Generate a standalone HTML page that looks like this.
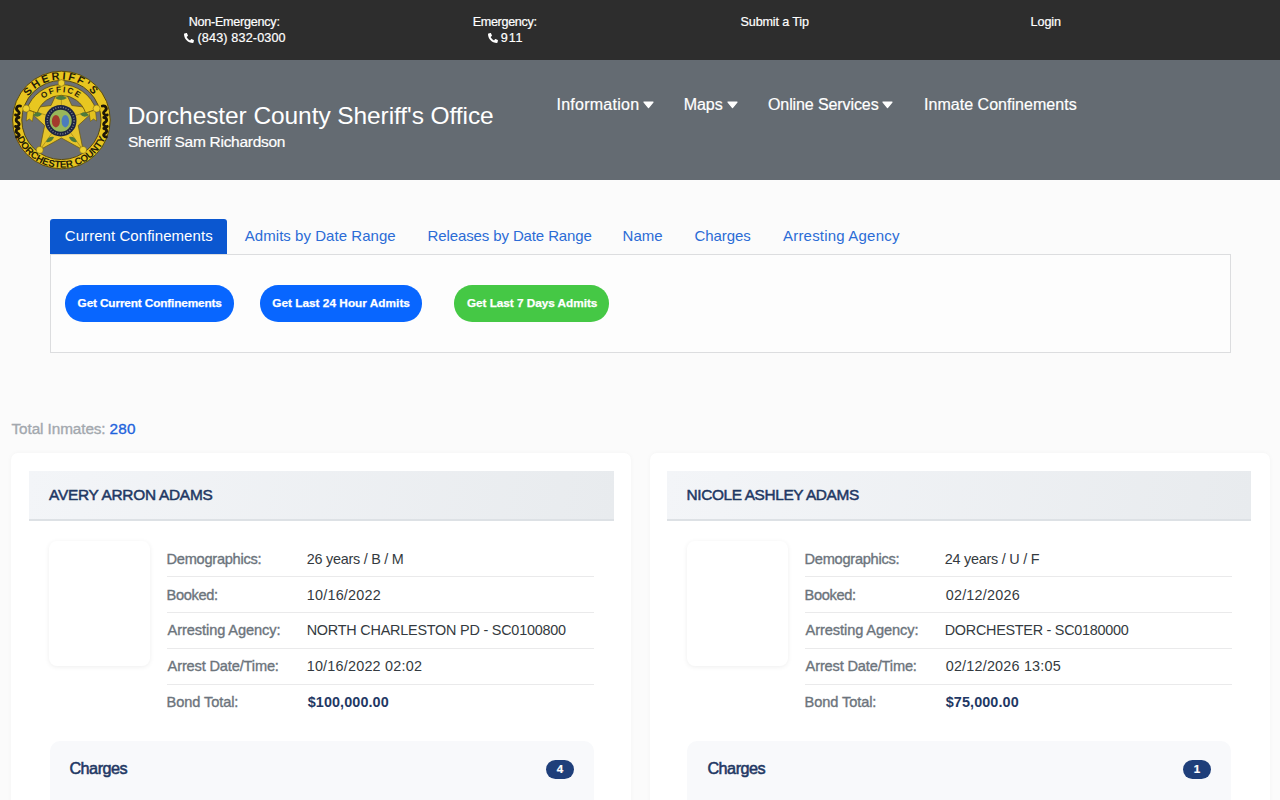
<!DOCTYPE html>
<html>
<head>
<meta charset="utf-8">
<style>
*{box-sizing:border-box;margin:0;padding:0}
html,body{width:1280px;height:800px;overflow:hidden}
body{position:relative;background:#fbfbfb;font-family:"Liberation Sans",sans-serif}
.a{position:absolute;white-space:nowrap;line-height:1}
.box{position:absolute}
.ph{position:absolute;width:10px;height:10px}
.caret{position:absolute;width:11px;height:8px}
.btn{position:absolute;height:36.4px;border-radius:18.2px;background:#0866ff}
.card{position:absolute;top:453px;width:620px;height:400px;background:#ffffff;border-radius:7px;box-shadow:0 0 5px rgba(0,0,0,0.035)}
.chdr{position:absolute;top:471px;width:584.5px;height:50px;background:linear-gradient(100deg,#f3f5f8,#e8ebee);border-bottom:2px solid #dde1e5}
.photo{position:absolute;top:541px;width:101px;height:124.8px;background:#fff;border-radius:8px;box-shadow:0 1px 5px rgba(0,0,0,0.07)}
.sep{position:absolute;height:1px;width:427px;background:#eaeaeb}
.chg{position:absolute;top:740.6px;width:544px;height:80px;background:#f8f9fb;border-radius:10px}
.badge{position:absolute;top:760px;width:28px;height:18.8px;border-radius:9.4px;background:#1f3f7a;color:#fff;font-size:11.5px;font-weight:bold;-webkit-text-stroke:0.2px #fff;text-align:center;line-height:19.5px}
</style>
</head>
<body>
<div class="box" style="left:0;top:0;width:1280px;height:60px;background:#2d2d2d"></div>
<div class="box" style="left:0;top:60px;width:1280px;height:120px;background:#646b72"></div>
<svg class="ph" style="left:184px;top:32.5px" viewBox="0 0 512 512"><path fill="#fff" d="M497 361l-111-48c-10-4-21-1-28 7l-49 60C232 344 170 282 134 205l60-49c8-7 11-18 7-28L153 17C148 6 136 0 124 3L21 27C9 29 0 40 0 52c0 253 205 460 460 460 12 0 23-9 25-21l24-103c3-12-3-24-12-27z"/></svg>
<svg class="ph" style="left:487.5px;top:32.5px" viewBox="0 0 512 512"><path fill="#fff" d="M497 361l-111-48c-10-4-21-1-28 7l-49 60C232 344 170 282 134 205l60-49c8-7 11-18 7-28L153 17C148 6 136 0 124 3L21 27C9 29 0 40 0 52c0 253 205 460 460 460 12 0 23-9 25-21l24-103c3-12-3-24-12-27z"/></svg>
<div class="a" style="left:188.7px;top:16px;font-size:12.6px;color:#fff;letter-spacing:-0.254px;-webkit-text-stroke:0.2px #fff">Non-Emergency:</div>
<div class="a" style="left:197.5px;top:32px;font-size:12.6px;color:#fff;letter-spacing:0.154px;-webkit-text-stroke:0.2px #fff">(843) 832-0300</div>
<div class="a" style="left:472.7px;top:16px;font-size:12.6px;color:#fff;letter-spacing:-0.322px;-webkit-text-stroke:0.2px #fff">Emergency:</div>
<div class="a" style="left:500.8px;top:32px;font-size:12.6px;color:#fff;letter-spacing:0.85px;-webkit-text-stroke:0.2px #fff">911</div>
<div class="a" style="left:740.6px;top:16px;font-size:12.6px;color:#fff;letter-spacing:-0.155px;-webkit-text-stroke:0.2px #fff">Submit a Tip</div>
<div class="a" style="left:1030.6px;top:16px;font-size:12.6px;color:#fff;letter-spacing:-0.1px;-webkit-text-stroke:0.2px #fff">Login</div>
<div class="box" style="left:0;top:60px;width:120px;height:120px"><svg width="120" height="120" viewBox="0 0 120 120" style="position:absolute;left:0;top:0">
<defs>
<path id="arcTop" d="M 20.9 60 A 40.5 40.5 0 0 1 101.9 60"/>
<path id="arcBot" d="M 13.6 60 A 47.8 47.8 0 0 0 109.2 60"/>
<path id="arcOff" d="M 33.6 60 A 27.8 27.8 0 0 1 89.2 60"/>
</defs>
<circle cx="61.4" cy="60" r="48.8" fill="#e8c51f" stroke="#5a4a0e" stroke-width="1"/>
<circle cx="61.4" cy="60" r="39.6" fill="#6c7075" stroke="#5a4a0e" stroke-width="1"/>
<!-- star -->
<path d="M61.4 23 L71.8 45.5 L96.6 48.6 L78.2 65.5 L83.1 89.9 L61.4 78 L39.7 89.9 L44.6 65.5 L26.2 48.6 L51 45.5 Z" fill="#e6c52a" stroke="#6e5a10" stroke-width="0.8"/>
<path d="M61.4 24 L61.4 60 M27 49 L61.4 60 M95.8 49 L61.4 60 M40.5 89 L61.4 60 M82.3 89 L61.4 60" stroke="#9a7f14" stroke-width="0.8" opacity="0.8"/>
<!-- office band -->
<path d="M 26.8 49.5 A 36.5 36.5 0 0 1 96 49.5 L 85.6 53 A 25.4 25.4 0 0 0 37.2 53 Z" fill="#e8c720" stroke="#5a4a0e" stroke-width="0.8"/>
<path d="M27.4 50 l-1.2 11 l3.2 -2 l3 2.4 l1.4 -9.4 Z M95.4 50 l1.2 11 l-3.2 -2 l-3 2.4 l-1.4 -9.4 Z" fill="#e3c21e" stroke="#5a4a0e" stroke-width="0.5"/>
<text font-family="Liberation Sans" font-weight="bold" font-size="8.2" fill="#2a220c" letter-spacing="1.6"><textPath href="#arcOff" startOffset="50%" text-anchor="middle">OFFICE</textPath></text>
<circle cx="61.4" cy="23" r="3.3" fill="#edd030" stroke="#6e5a10" stroke-width="0.5"/>
<circle cx="26.2" cy="48.6" r="3.5" fill="#edd030" stroke="#6e5a10" stroke-width="0.5"/>
<circle cx="96.6" cy="48.6" r="3.5" fill="#edd030" stroke="#6e5a10" stroke-width="0.5"/>
<circle cx="39.7" cy="89.9" r="3.5" fill="#edd030" stroke="#6e5a10" stroke-width="0.5"/>
<circle cx="83.1" cy="89.9" r="3.5" fill="#edd030" stroke="#6e5a10" stroke-width="0.5"/>
<!-- leaves -->
<path d="M55 38 q6 -5 12 0 q-6 4 -12 0Z M33 55 q4 -5 9 -1 q-4 5 -9 1Z M80 54 q5 -4 9 1 q-5 4 -9 -1Z M46 82 q2 -6 8 -5 q-2 6 -8 5Z M69 77 q6 -1 8 5 q-6 1 -8 -5Z" fill="#4e7a3c"/>
<!-- seal -->
<circle cx="60.7" cy="60.7" r="15.8" fill="#1d2442"/>
<circle cx="60.7" cy="60.7" r="11" fill="#98b65a"/>
<ellipse cx="55.9" cy="61.2" rx="4" ry="6.2" fill="#a33a2c"/>
<ellipse cx="65.3" cy="61.2" rx="3.7" ry="6.2" fill="#4b7cbd"/>
<circle cx="60.7" cy="60.7" r="13.4" fill="none" stroke="#c8c8d0" stroke-width="1.5" stroke-dasharray="1 1.6" opacity="0.55"/>
<!-- ring text -->
<text font-family="Liberation Sans" font-weight="bold" font-size="10.8" fill="#241c08" letter-spacing="2.4"><textPath href="#arcTop" startOffset="50%" text-anchor="middle">SHERIFF'S</textPath></text>
<text font-family="Liberation Sans" font-weight="bold" font-size="9.8" fill="#241c08" letter-spacing="0"><textPath href="#arcBot" startOffset="50%" text-anchor="middle">DORCHESTER COUNTY</textPath></text>
<!-- scrolls -->
<g fill="none" stroke="#1c1608" stroke-width="2.8" stroke-linecap="round">
<path d="M20.5 46 c-3.5 -1 -5.5 3 -2.5 5 c2.5 2 0.5 4.5 -2.5 4 M19 57.5 c-3 0 -4 3.5 -1 5 c2.5 1.5 0.5 4.5 -2.5 4 M19 68.5 c-3 0 -4 3.5 -1 5 c2.5 1.5 0.5 3.5 -1.5 3.5"/>
<path d="M102.3 46 c3.5 -1 5.5 3 2.5 5 c-2.5 2 -0.5 4.5 2.5 4 M103.8 57.5 c3 0 4 3.5 1 5 c-2.5 1.5 -0.5 4.5 2.5 4 M103.8 68.5 c3 0 4 3.5 1 5 c-2.5 1.5 -0.5 3.5 1.5 3.5"/>
</g>
</svg>
</div>
<div class="a" style="left:127.7px;top:104px;font-size:24.5px;color:#fff;letter-spacing:-0.082px">Dorchester County Sheriff's Office</div>
<div class="a" style="left:128.0px;top:134px;font-size:15.5px;color:#fff;letter-spacing:-0.286px;-webkit-text-stroke:0.2px #fff">Sheriff Sam Richardson</div>
<div class="a" style="left:556.5px;top:97px;font-size:16px;color:#fff;letter-spacing:0.25px;-webkit-text-stroke:0.2px #fff">Information</div>
<div class="a" style="left:683.7px;top:97px;font-size:16px;color:#fff;letter-spacing:-0.033px;-webkit-text-stroke:0.2px #fff">Maps</div>
<div class="a" style="left:768.0px;top:97px;font-size:16px;color:#fff;letter-spacing:-0.1px;-webkit-text-stroke:0.2px #fff">Online Services</div>
<div class="a" style="left:924.0px;top:97px;font-size:16px;color:#fff;letter-spacing:0.033px;-webkit-text-stroke:0.2px #fff">Inmate Confinements</div>
<svg class="caret" style="left:642.5px;top:101px" viewBox="0 0 11 8"><path d="M1 1 H10 L5.5 6.6 Z" fill="#fff" stroke="#fff" stroke-width="1.2" stroke-linejoin="round"/></svg>
<svg class="caret" style="left:726.8px;top:101px" viewBox="0 0 11 8"><path d="M1 1 H10 L5.5 6.6 Z" fill="#fff" stroke="#fff" stroke-width="1.2" stroke-linejoin="round"/></svg>
<svg class="caret" style="left:882.2px;top:101px" viewBox="0 0 11 8"><path d="M1 1 H10 L5.5 6.6 Z" fill="#fff" stroke="#fff" stroke-width="1.2" stroke-linejoin="round"/></svg>
<div class="box" style="left:49.5px;top:253.5px;width:1181px;height:99.5px;border:1px solid #dcdddf;background:#fdfdfd"></div>
<div class="box" style="left:50px;top:219px;width:177px;height:35px;background:#0b57d0;border-radius:3px 3px 0 0"></div>
<div class="a" style="left:64.8px;top:228px;font-size:15px;color:#fff;letter-spacing:0.058px">Current Confinements</div>
<div class="a" style="left:244.8px;top:228px;font-size:15px;color:#2b6cd6;letter-spacing:0.042px">Admits by Date Range</div>
<div class="a" style="left:427.6px;top:228px;font-size:15px;color:#2b6cd6;letter-spacing:-0.119px">Releases by Date Range</div>
<div class="a" style="left:622.6px;top:228px;font-size:15px;color:#2b6cd6;letter-spacing:0.033px">Name</div>
<div class="a" style="left:694.5px;top:228px;font-size:15px;color:#2b6cd6;letter-spacing:-0.067px">Charges</div>
<div class="a" style="left:783.0px;top:228px;font-size:15px;color:#2b6cd6;letter-spacing:0.2px">Arresting Agency</div>
<div class="btn" style="left:65.2px;top:285.2px;width:168.7px"></div>
<div class="btn" style="left:260.2px;top:285.2px;width:161.7px"></div>
<div class="btn" style="left:454px;top:285.2px;width:154.8px;background:#45c845"></div>
<div class="a" style="left:77.6px;top:298px;font-size:11.8px;color:#fff;letter-spacing:-0.139px;font-weight:700;-webkit-text-stroke:0.25px #fff">Get Current Confinements</div>
<div class="a" style="left:272.2px;top:298px;font-size:11.8px;color:#fff;letter-spacing:0.023px;font-weight:700;-webkit-text-stroke:0.25px #fff">Get Last 24 Hour Admits</div>
<div class="a" style="left:466.9px;top:298px;font-size:11.8px;color:#fff;letter-spacing:-0.043px;font-weight:700;-webkit-text-stroke:0.25px #fff">Get Last 7 Days Admits</div>
<div class="a" style="left:11.5px;top:421px;font-size:15.3px;color:#a3a8ae;letter-spacing:-0.085px;-webkit-text-stroke:0.35px #a3a8ae">Total Inmates:</div>
<div class="a" style="left:109.4px;top:421px;font-size:15.3px;color:#1f63dc;letter-spacing:0.3px;-webkit-text-stroke:0.35px #1f63dc">280</div>
<div class="card" style="left:10.5px"></div>
<div class="chdr" style="left:29px;width:584.5px"></div>
<div class="photo" style="left:48.5px"></div>
<div class="sep" style="left:167px;top:576px"></div>
<div class="sep" style="left:167px;top:612px"></div>
<div class="sep" style="left:167px;top:648px"></div>
<div class="sep" style="left:167px;top:684px"></div>
<div class="chg" style="left:49.5px"></div>
<div class="badge" style="left:546px">4</div>
<div class="a" style="left:49.0px;top:487px;font-size:15.4px;color:#1f3864;letter-spacing:-0.244px;-webkit-text-stroke:0.5px #1f3864">AVERY ARRON ADAMS</div>
<div class="a" style="left:166.6px;top:552px;font-size:14.6px;color:#6c747c;letter-spacing:-0.267px;-webkit-text-stroke:0.35px #6c747c">Demographics:</div>
<div class="a" style="left:306.7px;top:552px;font-size:14.4px;color:#343a40;letter-spacing:-0.24px">26 years / B / M</div>
<div class="a" style="left:166.6px;top:588px;font-size:14.6px;color:#6c747c;letter-spacing:-0.367px;-webkit-text-stroke:0.35px #6c747c">Booked:</div>
<div class="a" style="left:306.7px;top:588px;font-size:14.4px;color:#343a40;letter-spacing:0.233px">10/16/2022</div>
<div class="a" style="left:167.6px;top:623px;font-size:14.6px;color:#6c747c;letter-spacing:-0.088px;-webkit-text-stroke:0.35px #6c747c">Arresting Agency:</div>
<div class="a" style="left:306.7px;top:623px;font-size:14.4px;color:#343a40;letter-spacing:-0.213px">NORTH CHARLESTON PD - SC0100800</div>
<div class="a" style="left:167.6px;top:659px;font-size:14.6px;color:#6c747c;letter-spacing:-0.156px;-webkit-text-stroke:0.35px #6c747c">Arrest Date/Time:</div>
<div class="a" style="left:306.7px;top:659px;font-size:14.4px;color:#343a40;letter-spacing:0.213px">10/16/2022 02:02</div>
<div class="a" style="left:166.6px;top:695px;font-size:14.6px;color:#6c747c;letter-spacing:-0.1px;-webkit-text-stroke:0.35px #6c747c">Bond Total:</div>
<div class="a" style="left:307.7px;top:695px;font-size:14.4px;color:#1f3864;letter-spacing:0.1px;font-weight:700">$100,000.00</div>
<div class="a" style="left:69.4px;top:760px;font-size:16.2px;color:#1f3864;letter-spacing:-0.483px;-webkit-text-stroke:0.55px #1f3864">Charges</div>
<div class="card" style="left:649.5px"></div>
<div class="chdr" style="left:667px;width:584px"></div>
<div class="photo" style="left:686.5px"></div>
<div class="sep" style="left:805px;top:576px"></div>
<div class="sep" style="left:805px;top:612px"></div>
<div class="sep" style="left:805px;top:648px"></div>
<div class="sep" style="left:805px;top:684px"></div>
<div class="chg" style="left:687px"></div>
<div class="badge" style="left:1183px">1</div>
<div class="a" style="left:686.5px;top:487px;font-size:15.4px;color:#1f3864;letter-spacing:-0.367px;-webkit-text-stroke:0.5px #1f3864">NICOLE ASHLEY ADAMS</div>
<div class="a" style="left:804.6px;top:552px;font-size:14.6px;color:#6c747c;letter-spacing:-0.267px;-webkit-text-stroke:0.35px #6c747c">Demographics:</div>
<div class="a" style="left:944.7px;top:552px;font-size:14.4px;color:#343a40;letter-spacing:-0.233px">24 years / U / F</div>
<div class="a" style="left:804.6px;top:588px;font-size:14.6px;color:#6c747c;letter-spacing:-0.367px;-webkit-text-stroke:0.35px #6c747c">Booked:</div>
<div class="a" style="left:945.7px;top:588px;font-size:14.4px;color:#343a40;letter-spacing:0.222px">02/12/2026</div>
<div class="a" style="left:805.6px;top:623px;font-size:14.6px;color:#6c747c;letter-spacing:-0.087px;-webkit-text-stroke:0.35px #6c747c">Arresting Agency:</div>
<div class="a" style="left:944.7px;top:623px;font-size:14.4px;color:#343a40;letter-spacing:-0.262px">DORCHESTER - SC0180000</div>
<div class="a" style="left:805.6px;top:659px;font-size:14.6px;color:#6c747c;letter-spacing:-0.156px;-webkit-text-stroke:0.35px #6c747c">Arrest Date/Time:</div>
<div class="a" style="left:945.7px;top:659px;font-size:14.4px;color:#343a40;letter-spacing:0.2px">02/12/2026 13:05</div>
<div class="a" style="left:804.6px;top:695px;font-size:14.6px;color:#6c747c;letter-spacing:-0.1px;-webkit-text-stroke:0.35px #6c747c">Bond Total:</div>
<div class="a" style="left:945.7px;top:695px;font-size:14.4px;color:#1f3864;letter-spacing:0.111px;font-weight:700">$75,000.00</div>
<div class="a" style="left:707.4px;top:760px;font-size:16.2px;color:#1f3864;letter-spacing:-0.483px;-webkit-text-stroke:0.55px #1f3864">Charges</div>
</body>
</html>
